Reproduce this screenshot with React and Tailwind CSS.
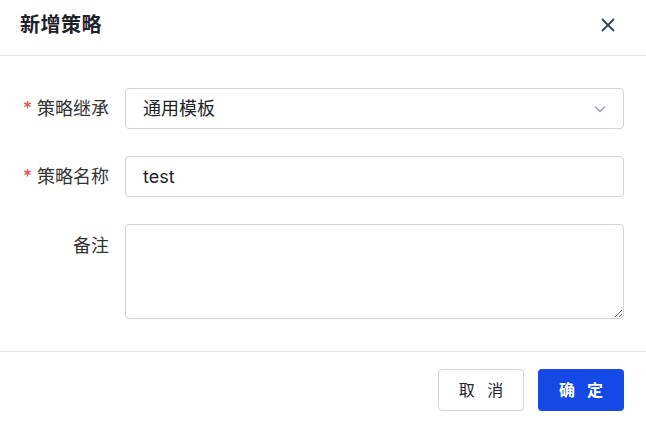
import React from 'react';

function App() {
  return (
    <div
      className="w-[646px] h-[425px] bg-white text-[#1f2329] overflow-hidden"
      style={{ fontFamily: 'Inter, "Noto Sans CJK SC", sans-serif' }}
    >
      <div className="h-[56px] flex items-center justify-between pl-[20px] pr-[30px] pb-[6px] border-b border-[#e5e7eb]">
        <h2 className="text-[20px] font-bold text-[#1f2329] tracking-[0.5px]">新增策略</h2>
        <svg width="16" height="16" viewBox="0 0 16 16" className="text-[#374151]">
          <path d="M2.5 2.5 L13.5 13.5 M13.5 2.5 L2.5 13.5" stroke="currentColor" strokeWidth="1.8" strokeLinecap="round" />
        </svg>
      </div>

      <div className="pt-[32px] pb-[32px] pl-[22px] pr-[22px] flex flex-col gap-[27px]">
        <div className="flex items-center">
          <label className="w-[103px] shrink-0 text-right text-[18px] text-[#333] pr-[16px] whitespace-nowrap">
            <span className="text-[#ef4444] mr-[5px]">*</span>策略继承
          </label>
          <div className="flex-1 h-[41px] border border-[#d1d5db] rounded-[4px] flex items-center justify-between pl-[17px] pr-[16px]">
            <span className="text-[18px] text-[#1f2329]">通用模板</span>
            <svg width="14" height="14" viewBox="0 0 14 14" className="text-[#9ca3af]">
              <path d="M2.5 5 L7 9.5 L11.5 5" fill="none" stroke="currentColor" strokeWidth="1.5" strokeLinecap="round" strokeLinejoin="round" />
            </svg>
          </div>
        </div>

        <div className="flex items-center">
          <label className="w-[103px] shrink-0 text-right text-[18px] text-[#333] pr-[16px] whitespace-nowrap">
            <span className="text-[#ef4444] mr-[5px]">*</span>策略名称
          </label>
          <div className="flex-1 h-[41px] border border-[#d1d5db] rounded-[4px] flex items-center pl-[17px]">
            <span className="text-[18px] text-[#1f2329]">test</span>
          </div>
        </div>

        <div className="flex items-start">
          <label className="w-[103px] shrink-0 text-right text-[18px] text-[#333] pr-[16px] pt-[8px] whitespace-nowrap">
            备注
          </label>
          <textarea
            className="flex-1 h-[95px] border border-[#d1d5db] rounded-[4px] outline-none px-[17px] py-[8px] text-[18px] resize-y"
            defaultValue=""
          />
        </div>
      </div>

      <div className="border-t border-[#e5e7eb] h-[74px] flex items-center justify-end gap-[14px] pr-[22px] pt-[3px]">
        <button className="w-[86px] h-[42px] border border-[#d1d5db] rounded-[4px] bg-white text-[16px] text-[#1f2329] tracking-[4px] pl-[4px]">
          取 消
        </button>
        <button className="w-[86px] h-[42px] rounded-[4px] bg-[#1449e6] text-[16px] font-semibold text-white tracking-[4px] pl-[4px]">
          确 定
        </button>
      </div>
    </div>
  );
}

export default App;
